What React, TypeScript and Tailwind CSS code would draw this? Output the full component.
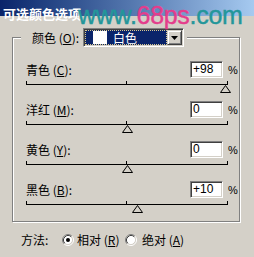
import React from "react";

const CJK = '"Noto Sans CJK SC", "Liberation Sans", sans-serif';
const SANS = '"Liberation Sans", Arial, sans-serif';

function Acc({ zh, k }: { zh: string; k: string }) {
  return (
    <span className="whitespace-nowrap">
      {zh} (<span className="underline underline-offset-1">{k}</span>):
    </span>
  );
}

function Sunken({ children, className = "" }: { children?: React.ReactNode; className?: string }) {
  return (
    <div
      className={
        "border border-t-[#808080] border-l-[#808080] border-b-white border-r-white shadow-[inset_1px_1px_0_#404040,inset_-1px_-1px_0_#d4d0c8] " +
        className
      }
    >
      {children}
    </div>
  );
}

function Slider({ value }: { value: number }) {
  const pos = ((value + 100) / 200) * 201;
  return (
    <div className="relative ml-[13px] mt-[3px] h-[12px] w-[202px]">
      <div className="absolute left-0 right-0 top-[3px] h-px bg-black" />
      <div className="absolute left-0 top-0 h-[4px] w-px bg-black" />
      <div className="absolute left-[100px] top-0 h-[4px] w-px bg-black" />
      <div className="absolute right-0 top-0 h-[4px] w-px bg-black" />
      <svg
        className="absolute top-[4px]"
        style={{ left: `${pos - 5}px` }}
        width="11"
        height="8"
        viewBox="0 0 11 8"
      >
        <polygon points="5.5,0.5 10.5,7.5 0.5,7.5" fill="#d4d0c8" stroke="#000" strokeWidth="1" />
      </svg>
    </div>
  );
}

function Row({ zh, k, val, num }: { zh: string; k: string; val: string; num: number }) {
  return (
    <div className="mb-[8px]">
      <div className="flex h-[17px] items-center pl-[13px]">
        <div className="w-[164px] text-[12px] leading-[14px]" style={{ fontFamily: CJK }}>
          <Acc zh={zh} k={k} />
        </div>
        <Sunken className="h-[17px] w-[33px] bg-white pl-[2px] pt-[1px]">
          <span className="block text-[12px] leading-[13px] text-black" style={{ fontFamily: SANS }}>
            {val}
          </span>
        </Sunken>
        <span className="ml-[5px] text-[11px] leading-[12px]" style={{ fontFamily: SANS }}>
          %
        </span>
      </div>
      <Slider value={num} />
    </div>
  );
}

function Radio({ checked }: { checked: boolean }) {
  return (
    <svg width="12" height="12" viewBox="0 0 12 12" className="shrink-0">
      <circle cx="6" cy="6" r="4.5" fill="#fff" />
      <path d="M2.11 9.89 A5.5 5.5 0 0 1 9.89 2.11" fill="none" stroke="#808080" />
      <path d="M9.89 2.11 A5.5 5.5 0 0 1 2.11 9.89" fill="none" stroke="#fff" />
      <path d="M2.82 9.18 A4.5 4.5 0 0 1 9.18 2.82" fill="none" stroke="#404040" />
      <path d="M9.18 2.82 A4.5 4.5 0 0 1 2.82 9.18" fill="none" stroke="#d4d0c8" />
      {checked && <circle cx="6" cy="6" r="2" fill="#000" />}
    </svg>
  );
}

export default function App() {
  return (
    <div className="relative h-[257px] w-[254px] overflow-hidden bg-[#d4d0c8] text-black" style={{ fontFamily: CJK }}>
      <div className="h-[16px] bg-gradient-to-r from-[#0a246a] to-[#a6caf0] pl-[3px]">
        <span className="text-[13px] font-bold leading-[16px] text-white" style={{ fontFamily: CJK }}>
          可选颜色选项
        </span>
      </div>

      <div className="pl-[12px]">
        <div className="mt-[21px] h-[185px] w-[228px] border border-[#808080] shadow-[1px_1px_0_#fff,inset_1px_1px_0_#fff]">
          <div className="-mt-[10px] ml-[8px] flex w-fit items-center bg-[#d4d0c8] pl-[11px] pr-[3px]">
            <div className="w-[51px] text-[12px] leading-[14px]">
              <Acc zh="颜色" k="O" />
            </div>
            <Sunken className="flex h-[19px] w-[101px] bg-white p-px">
              <div className="flex h-full w-[82px] items-center bg-[#0a246a] pl-[2px] outline-1 -outline-offset-1 outline-dotted outline-[#d8c890]">
                <div className="ml-[6px] h-[13px] w-[14px] bg-white" />
                <span className="ml-[6px] text-[12px] leading-[14px] text-white">白色</span>
              </div>
              <div className="flex h-full w-[15px] items-center justify-center border border-t-[#d4d0c8] border-l-[#d4d0c8] border-b-[#404040] border-r-[#404040] bg-[#d4d0c8] shadow-[inset_1px_1px_0_#fff,inset_-1px_-1px_0_#808080]">
                <svg width="7" height="4" viewBox="0 0 7 4">
                  <polygon points="0,0 7,0 3.5,4" fill="#000" />
                </svg>
              </div>
            </Sunken>
          </div>

          <div className="mt-[14px]">
            <Row zh="青色" k="C" val="+98" num={98} />
            <Row zh="洋红" k="M" val="0" num={0} />
            <Row zh="黄色" k="Y" val="0" num={0} />
            <Row zh="黑色" k="B" val="+10" num={10} />
          </div>
        </div>
      </div>

      <div className="mt-[11px] flex h-[14px] items-center pl-[21px] text-[12px] leading-[14px]">
        <span className="w-[41px]">方法:</span>
        <Radio checked />
        <span className="ml-[3px] w-[48px] whitespace-nowrap">
          相对 (<span className="underline underline-offset-1">R</span>)
        </span>
        <Radio checked={false} />
        <span className="ml-[5px] whitespace-nowrap">
          绝对 (<span className="underline underline-offset-1">A</span>)
        </span>
      </div>

      <div
        className="pointer-events-none absolute left-[78px] top-[3px] text-[25px] leading-[25px] tracking-[-0.3px]"
        style={{ fontFamily: SANS, WebkitTextStroke: "0.4px currentColor" }}
      >
        <span className="text-[#23969a]">www.</span>
        <span className="text-[#e43d8c]">68ps</span>
        <span className="text-[#23969a]">.com</span>
      </div>
    </div>
  );
}
